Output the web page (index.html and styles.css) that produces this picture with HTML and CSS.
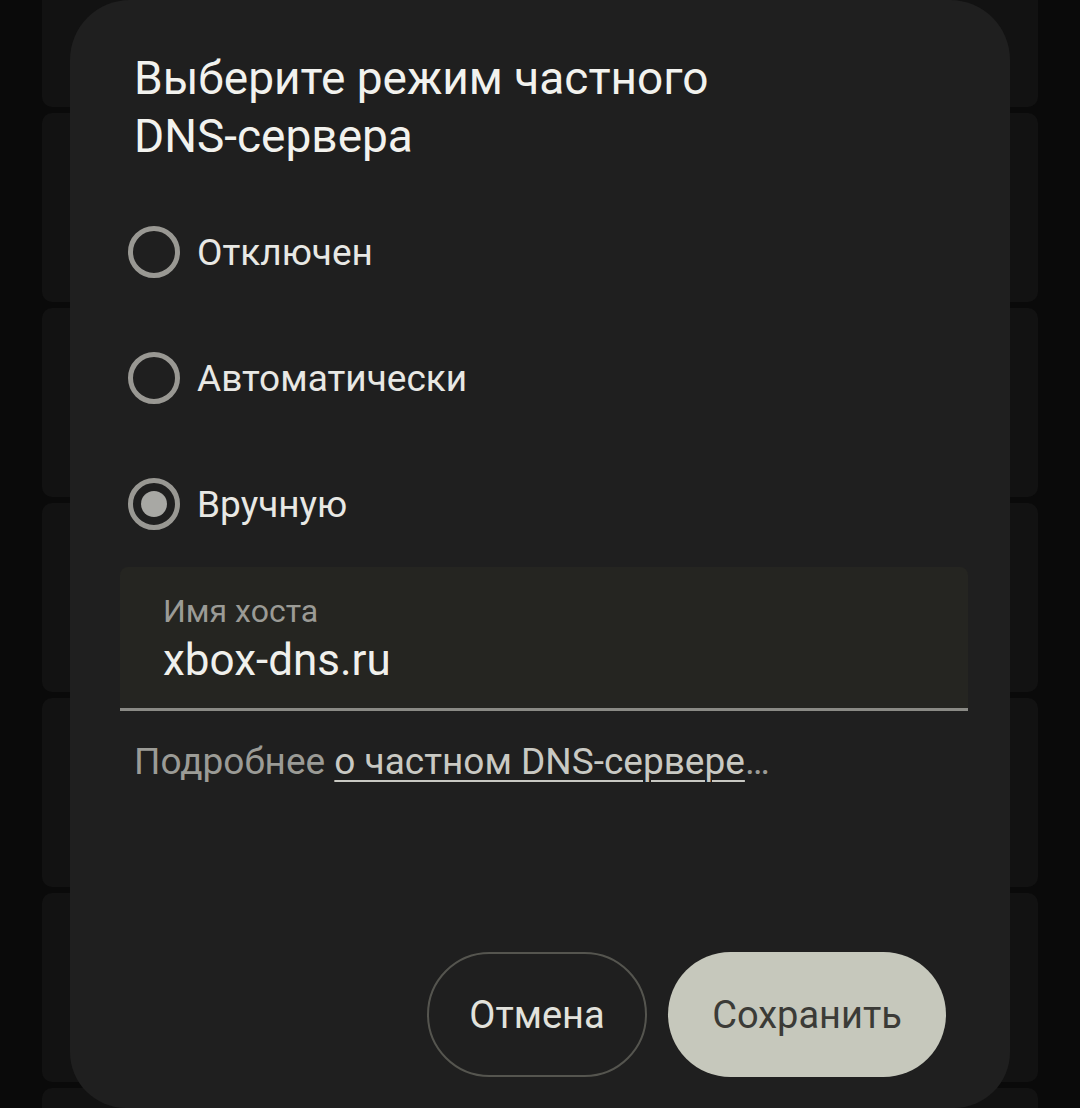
FILE: index.html
```html
<!DOCTYPE html>
<html lang="ru">
<head>
  <meta charset="UTF-8">
  <meta name="viewport" content="width=device-width, initial-scale=1.0">
  <title>Частный DNS-сервер</title>
  <link rel="stylesheet" href="styles.css">
</head>
<body>
  <div class="screen">
    <div class="backdrop">
      <div class="bg-card first"></div>
      <div class="bg-card"></div>
      <div class="bg-card"></div>
      <div class="bg-card"></div>
      <div class="bg-card"></div>
      <div class="bg-card"></div>
      <div class="bg-card last"></div>
    </div>

    <div class="dialog">
      <h2 class="dialog-title">Выберите режим частного DNS-сервера</h2>

      <div class="options">
        <label class="option">
          <span class="radio"></span>
          <span class="option-label">Отключен</span>
        </label>
        <label class="option">
          <span class="radio"></span>
          <span class="option-label">Автоматически</span>
        </label>
        <label class="option">
          <span class="radio checked"></span>
          <span class="option-label">Вручную</span>
        </label>
      </div>

      <div class="text-field">
        <span class="field-label">Имя хоста</span>
        <span class="field-value">xbox-dns.ru</span>
      </div>

      <p class="helper">Подробнее <a href="#">о частном DNS-сервере</a>…</p>

      <div class="actions">
        <button class="btn btn-outline">Отмена</button>
        <button class="btn btn-filled">Сохранить</button>
      </div>
    </div>
  </div>
</body>
</html>
```

FILE: styles.css
```css
body {
  margin: 0;
  background-color: #0a0a0a;
  font-family: Roboto, "Noto Sans", sans-serif;
}

.screen {
  position: relative;
  width: 1080px;
  height: 1108px;
  overflow: hidden;
}

.backdrop {
  display: flex;
  flex-direction: column;
  gap: 6px;
  height: 100%;
  padding: 0 42px;
}

.bg-card {
  flex: none;
  height: 189px;
  background: #121212;
  border-radius: 10px;
}

.bg-card.first {
  height: 107px;
  border-radius: 0 0 10px 10px;
}

.bg-card.last {
  height: 20px;
  border-radius: 10px 10px 0 0;
}

.dialog {
  position: absolute;
  top: 0;
  left: 70px;
  width: 940px;
  height: 1108px;
  box-sizing: border-box;
  padding: 49px 42px 0 64px;
  background: #1f1f1f;
  border-radius: 60px 60px 56px 56px;
  display: flex;
  flex-direction: column;
}

.dialog-title {
  margin: 0;
  font-size: 46px;
  font-weight: 400;
  line-height: 58px;
  color: #f2f2ee;
  width: 600px;
}

.options {
  display: flex;
  flex-direction: column;
  margin-top: 24px;
}

.option {
  display: flex;
  align-items: center;
  gap: 17px;
  height: 126px;
  margin-left: -6px;
}

.radio {
  width: 52px;
  height: 52px;
  box-sizing: border-box;
  border: 5px solid #999893;
  border-radius: 50%;
  display: flex;
  align-items: center;
  justify-content: center;
}

.radio.checked::after {
  content: "";
  width: 26px;
  height: 26px;
  border-radius: 50%;
  background: #a8a8a4;
}

.option-label {
  font-size: 37px;
  color: #e8e8e4;
}

.text-field {
  margin: 0 0 0 -14px;
  height: 144px;
  box-sizing: border-box;
  padding: 25px 43px 0;
  background: #252521;
  border-radius: 8px 8px 0 0;
  border-bottom: 3px solid #8a8a85;
  display: flex;
  flex-direction: column;
}

.field-label {
  font-size: 32px;
  color: #9b9b96;
  line-height: 38px;
}

.field-value {
  margin-top: 5px;
  font-size: 44px;
  color: #f0f0ec;
  line-height: 50px;
}

.helper {
  margin: 29px 0 0;
  font-size: 37px;
  color: #9b9b96;
}

.helper a {
  color: #c9c9c3;
  text-decoration: underline;
  text-underline-offset: 6px;
  text-decoration-thickness: 2px;
}

.actions {
  display: flex;
  justify-content: flex-end;
  gap: 21px;
  margin-top: auto;
  margin-bottom: 31px;
  margin-right: 22px;
}

.btn {
  height: 125px;
  border-radius: 63px;
  font-family: Roboto, "Noto Sans", sans-serif;
  font-size: 38px;
  cursor: pointer;
}

.btn-outline {
  width: 220px;
  background: transparent;
  border: 2px solid #55554f;
  color: #e2e2dc;
}

.btn-filled {
  width: 278px;
  background: #c6c8bc;
  border: none;
  color: #3b3b37;
}
```
